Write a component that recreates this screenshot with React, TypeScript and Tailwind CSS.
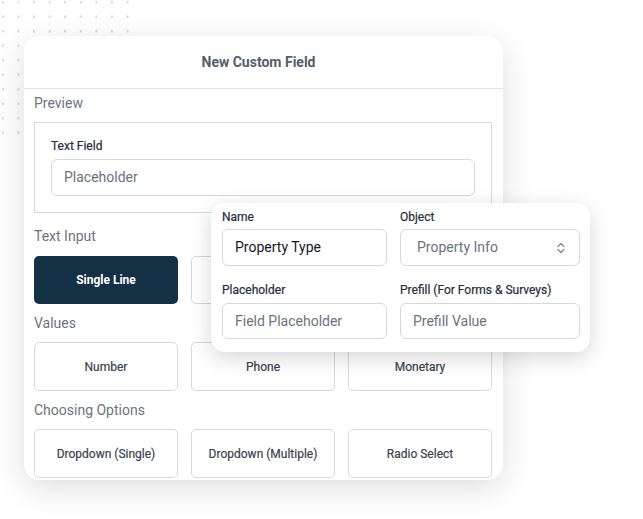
import React from 'react';

const font = { fontFamily: 'Roboto, "Liberation Sans", sans-serif' };

function OptionButton({ label, active }: { label?: string; active?: boolean }) {
  return (
    <div
      className={`h-full flex items-center justify-center rounded-[5px] text-[12px] ${
        active
          ? 'bg-[#133044] text-white font-bold'
          : 'bg-white border border-[#d5d8e0] text-[#3b4350] font-normal [-webkit-text-stroke:0.2px_#3b4350]'
      }`}
    >
      {label}
    </div>
  );
}

function SectionLabel({ children, className = '' }: { children: React.ReactNode; className?: string }) {
  return <div className={`h-5 leading-5 text-[14px] text-[#6b7480] ${className}`}>{children}</div>;
}

function FieldLabel({ children }: { children: React.ReactNode }) {
  return (
    <div className="h-4 leading-4 text-[12px] text-[#252d3a] [-webkit-text-stroke:0.2px_#252d3a]">
      {children}
    </div>
  );
}

export default function App() {
  return (
    <div className="relative w-[643px] h-[519px] bg-white overflow-hidden" style={font}>
      {/* dotted backdrop */}
      <div className="absolute left-0 top-0 w-[136px] h-[140px] bg-[radial-gradient(circle,#d6d6da_1px,transparent_1.3px)] bg-[length:15.6px_14.5px] bg-[position:-5px_-5px]" />

      <div className="relative pl-[24px] pt-[36px]">
        <div className="w-[479px] h-[444px] bg-white rounded-[16px] shadow-[0_8px_32px_rgba(0,0,0,0.13)] overflow-hidden">
          <div className="h-[53px] flex items-center justify-center pr-[10px] border-b border-[#e1e3e8] text-[14px] font-bold text-[#525f6b]">
            New Custom Field
          </div>

          <div className="pl-[10px] pr-[11px]">
            <SectionLabel className="mt-[4px]">Preview</SectionLabel>
            <div className="mt-[9px] h-[91px] border border-[#d5d8e0] px-[16px] pt-[15px]">
              <FieldLabel>Text Field</FieldLabel>
              <div className="mt-[5px] h-[37px] rounded-[6px] border border-[#d5d8e0] flex items-center pl-[12px] text-[14px] text-[#6b7280]">
                Placeholder
              </div>
            </div>

            <SectionLabel className="mt-[13px]">Text Input</SectionLabel>
            <div className="mt-[10px] h-[48px] grid grid-cols-3 gap-[13px]">
              <OptionButton label="Single Line" active />
              <OptionButton />
              <OptionButton />
            </div>

            <SectionLabel className="mt-[9px]">Values</SectionLabel>
            <div className="mt-[9px] h-[49px] grid grid-cols-3 gap-[13px]">
              <OptionButton label="Number" />
              <OptionButton label="Phone" />
              <OptionButton label="Monetary" />
            </div>

            <SectionLabel className="mt-[9px]">Choosing Options</SectionLabel>
            <div className="mt-[9px] h-[49px] grid grid-cols-3 gap-[13px]">
              <OptionButton label="Dropdown (Single)" />
              <OptionButton label="Dropdown (Multiple)" />
              <OptionButton label="Radio Select" />
            </div>
          </div>
        </div>

        {/* floating details popup */}
        <div className="absolute left-[211px] top-[203px] w-[379px] h-[149px] bg-white rounded-[14px] shadow-[0_6px_22px_rgba(0,0,0,0.16)] pl-[11px] pr-[10px] pt-[6px]">
          <div className="grid grid-cols-[165px_180px] gap-x-[13px]">
            <div>
              <FieldLabel>Name</FieldLabel>
              <div className="mt-[4px] h-[37px] rounded-[6px] border border-[#d5d8e0] flex items-center pl-[12px] text-[14px] text-[#111827]">
                Property Type
              </div>
            </div>
            <div>
              <FieldLabel>Object</FieldLabel>
              <div className="mt-[4px] h-[37px] rounded-[6px] border border-[#d5d8e0] flex items-center justify-between pl-[16px] pr-[13px] text-[14px] text-[#6b7280]">
                <span>Property Info</span>
                <svg width="10" height="14" viewBox="0 0 10 14" fill="none" stroke="#8a919c" strokeWidth="1.5" strokeLinecap="round" strokeLinejoin="round">
                  <path d="M2 5.5 5 2.5 8 5.5" />
                  <path d="M2 8.5 5 11.5 8 8.5" />
                </svg>
              </div>
            </div>

            <div className="mt-[16px]">
              <FieldLabel>Placeholder</FieldLabel>
              <div className="mt-[5px] h-[36px] rounded-[6px] border border-[#d5d8e0] flex items-center pl-[12px] text-[14px] text-[#6b7280]">
                Field Placeholder
              </div>
            </div>
            <div className="mt-[16px]">
              <FieldLabel>Prefill (For Forms &amp; Surveys)</FieldLabel>
              <div className="mt-[5px] h-[36px] rounded-[6px] border border-[#d5d8e0] flex items-center pl-[12px] text-[14px] text-[#6b7280]">
                Prefill Value
              </div>
            </div>
          </div>
        </div>
      </div>
    </div>
  );
}
